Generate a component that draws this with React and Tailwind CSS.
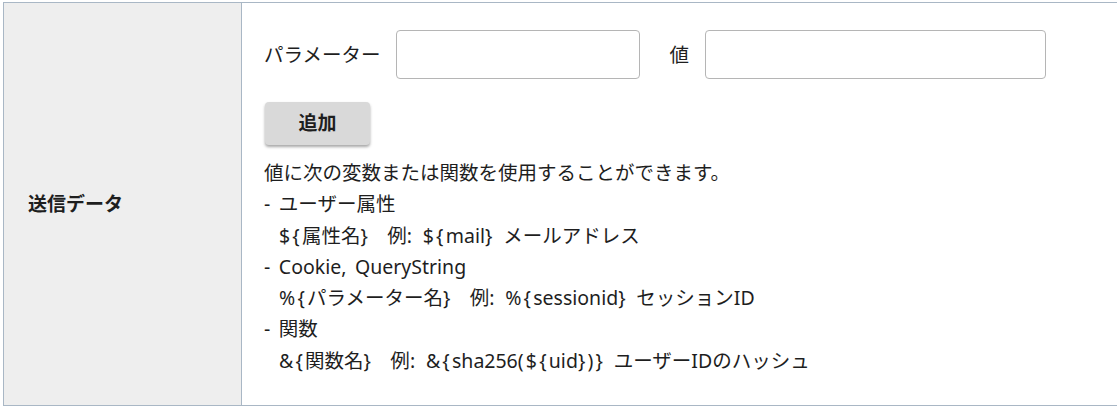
import React from "react";

function Fmt({ text }) {
  const parts = text.split(/([{}$%&():]+)/);
  return (
    <>
      {parts.map((p, i) =>
        i % 2 === 1 ? (
          <span key={i} className="tracking-[2.2px]">
            {p}
          </span>
        ) : (
          <span key={i}>{p}</span>
        )
      )}
    </>
  );
}

export default function App() {
  const lines = [
    [false, "値に次の変数または関数を使用することができます。"],
    [false, "- ユーザー属性"],
    [true, "${属性名}  例: ${mail} メールアドレス"],
    [false, "- Cookie, QueryString"],
    [true, "%{パラメーター名}  例: %{sessionid} セッションID"],
    [false, "- 関数"],
    [true, "&{関数名}  例: &{sha256(${uid})} ユーザーIDのハッシュ"],
  ];
  return (
    <div
      className="w-[1117px] h-[407px] bg-white pt-[2px] pl-[3px] text-[#1e1e1e] overflow-hidden"
      style={{ fontFamily: '"Noto Sans", "Noto Sans CJK JP", sans-serif' }}
    >
      <div className="flex h-[404px] border-t border-l border-b border-[#a9b7c5] box-border">
        <div className="w-[238px] shrink-0 bg-[#eeeeee] border-r border-[#a9b7c5] flex items-center pl-[24px] font-bold text-[19px]">
          送信データ
        </div>
        <div className="flex-1 pl-[22px] pt-[27px]">
          <div className="flex items-center text-[19.5px]">
            <span className="mr-[16px]">パラメーター</span>
            <input className="w-[244px] h-[49px] border border-[#b5b5b5] rounded-[4px] mr-[29px] outline-none" />
            <span className="mr-[16px]">値</span>
            <input className="w-[341px] h-[49px] border border-[#b5b5b5] rounded-[4px] outline-none" />
          </div>
          <button className="mt-[23px] ml-[1px] w-[105px] h-[43px] bg-[#d9d9d9] rounded-[4px] font-bold text-[19px] shadow-[0_2px_3px_rgba(0,0,0,0.35)] flex items-center justify-center">
            追加
          </button>
          <div className="mt-[12px] text-[19.5px] leading-[31.3px] whitespace-pre [word-spacing:3.5px]">
            {lines.map(([indent, l], i) => (
              <div key={i} className={indent ? "pl-[15px]" : ""}>
                <Fmt text={l} />
              </div>
            ))}
          </div>
        </div>
      </div>
    </div>
  );
}
